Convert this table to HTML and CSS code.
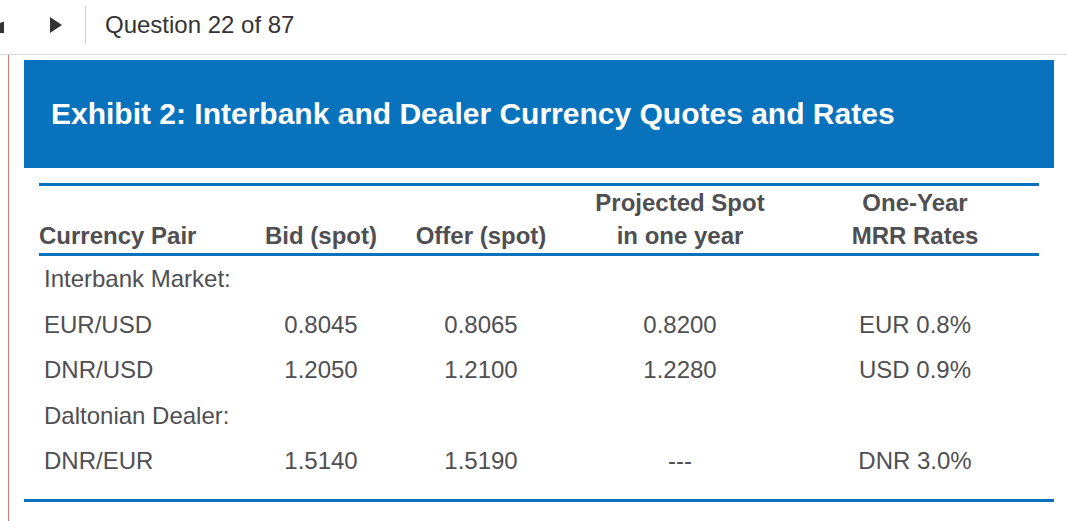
FILE: index.html
```html
<!DOCTYPE html>
<html lang="en">
<head>
<meta charset="utf-8">
<title>Question 22 of 87</title>
<link rel="stylesheet" href="styles.css">
</head>
<body>
<header class="topbar">
  <svg class="nav-prev" width="4" height="16" viewBox="0 0 4 16" aria-hidden="true"><polygon points="0,6 4,4.5 4,16 0,16" fill="#333"/></svg>
  <svg class="nav-next" width="12" height="16" viewBox="0 0 12 16" aria-hidden="true"><polygon points="0,0 12,8 0,16" fill="#333"/></svg>
  <span class="divider"></span>
  <span class="qnum">Question 22 of 87</span>
</header>
<main class="main">
  <section class="exhibit">
    <h2 class="exhibit-title">Exhibit 2: Interbank and Dealer Currency Quotes and Rates</h2>
    <div class="quote-table">
      <div class="thead">
        <div class="th th-left">Currency Pair</div>
        <div class="th">Bid (spot)</div>
        <div class="th">Offer (spot)</div>
        <div class="th">Projected Spot<br>in one year</div>
        <div class="th th-last">One-Year<br>MRR Rates</div>
      </div>
      <div class="tbody">
        <div class="td td-section">Interbank Market:</div>
        <div class="td td-left">EUR/USD</div>
        <div class="td">0.8045</div>
        <div class="td">0.8065</div>
        <div class="td">0.8200</div>
        <div class="td td-last">EUR 0.8%</div>
        <div class="td td-left">DNR/USD</div>
        <div class="td">1.2050</div>
        <div class="td">1.2100</div>
        <div class="td">1.2280</div>
        <div class="td td-last">USD 0.9%</div>
        <div class="td td-section">Daltonian Dealer:</div>
        <div class="td td-left">DNR/EUR</div>
        <div class="td">1.5140</div>
        <div class="td">1.5190</div>
        <div class="td">---</div>
        <div class="td td-last">DNR 3.0%</div>
      </div>
    </div>
  </section>
</main>
</body>
</html>
```
FILE: styles.css
```css
* { box-sizing: border-box; }

html, body {
  margin: 0;
  padding: 0;
  background: #fff;
  font-family: "Liberation Sans", Arial, sans-serif;
  overflow: hidden;
}

.topbar {
  display: flex;
  align-items: center;
  height: 55px;
  padding-bottom: 5px;
  border-bottom: 1px solid #d6d6d6;
}

.nav-prev {
  display: block;
  margin-right: 46px;
}

.nav-next {
  display: block;
  margin-right: 23px;
}

.divider {
  display: block;
  width: 1px;
  height: 38px;
  background: #cfcfcf;
  margin-right: 19px;
}

.qnum {
  font-size: 24px;
  color: #333;
}

.main {
  margin-left: 8px;
  border-left: 1px solid #d97a6c;
  padding: 5px 13px 0 15px;
  min-height: calc(100vh - 55px);
}

.exhibit {
  border-bottom: 3px solid #0a72bd;
}

.exhibit-title {
  margin: 0;
  height: 108px;
  display: flex;
  align-items: center;
  padding-left: 27px;
  background: #0872bd;
  color: #fff;
  font-size: 30px;
  font-weight: bold;
}

.quote-table {
  margin: 15px;
  color: #4f4f52;
  font-size: 24px;
}

.thead,
.tbody {
  display: grid;
  grid-template-columns: 200px 164px 156px 242px 1fr;
}

.thead {
  align-items: end;
  border-top: 3px solid #0a72bd;
  border-bottom: 3px solid #0a72bd;
  padding-bottom: 1px;
}

.th {
  font-weight: bold;
  line-height: 33px;
  text-align: center;
}

.th-left {
  text-align: left;
}

.th-last,
.td-last {
  padding-right: 10px;
}

.tbody {
  grid-auto-rows: 45.5px;
}

.td {
  line-height: 45.5px;
  text-align: center;
  white-space: nowrap;
}

.td-left {
  text-align: left;
  padding-left: 5px;
}

.td-section {
  grid-column: 1 / -1;
  text-align: left;
  padding-left: 5px;
}
```
